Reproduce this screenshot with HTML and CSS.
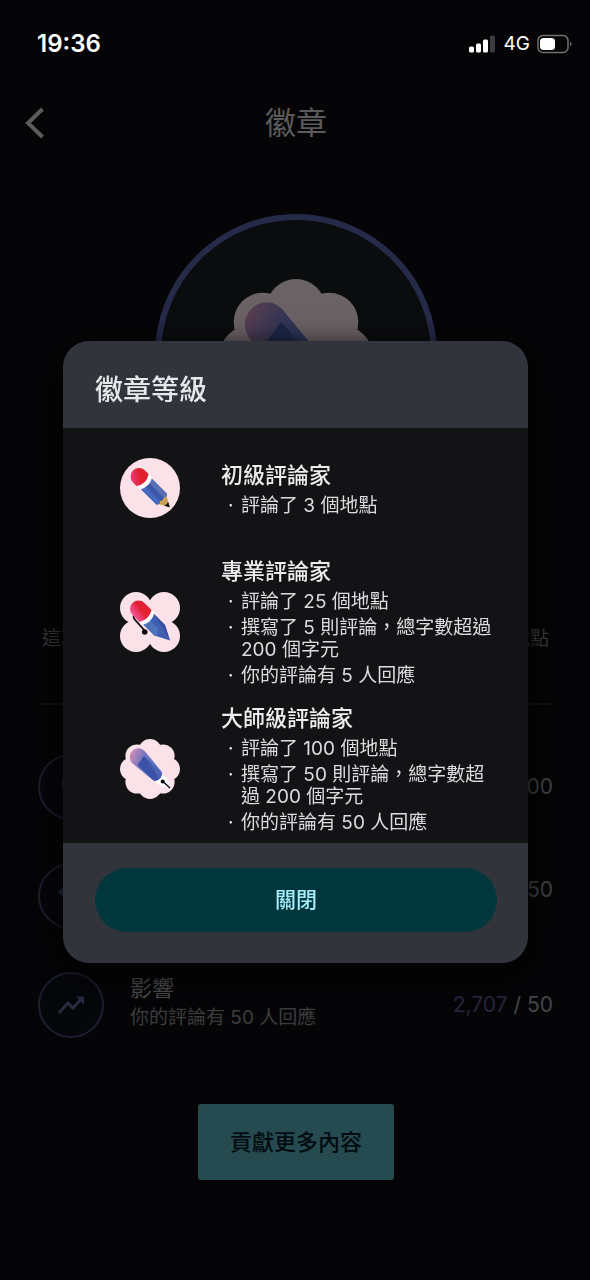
FILE: index.html
```html
<!DOCTYPE html>
<html lang="zh-Hant">
<head>
<meta charset="utf-8">
<meta name="viewport" content="width=device-width, initial-scale=1">
<title>徽章</title>
<link rel="stylesheet" href="styles.css">
</head>
<body>
<svg class="defs" width="0" height="0" aria-hidden="true">
  <defs>
    <linearGradient id="cap" x1="0.2" y1="1" x2="0.7" y2="0.2"><stop offset="0" stop-color="#f0408c"/><stop offset="0.7" stop-color="#e0202e"/></linearGradient>
    <linearGradient id="capTall" x1="0.3" y1="1" x2="0.5" y2="0"><stop offset="0" stop-color="#f65aa6"/><stop offset="0.6" stop-color="#e22132"/></linearGradient>
    <linearGradient id="pen" x1="0" y1="0.2" x2="0.7" y2="0.5"><stop offset="0" stop-color="#cf8ab6"/><stop offset="0.5" stop-color="#7b79be"/><stop offset="1" stop-color="#5a72c6"/></linearGradient>
    <symbol id="master" viewBox="0 0 60 60">
      <g fill="#fae2e8">
        <circle cx="30" cy="30" r="20"/>
        <circle cx="30" cy="11.6" r="11.6"/><circle cx="43" cy="17" r="11.6"/>
        <circle cx="48.4" cy="30" r="11.6"/><circle cx="43" cy="43" r="11.6"/>
        <circle cx="30" cy="48.4" r="11.6"/><circle cx="17" cy="43" r="11.6"/>
        <circle cx="11.6" cy="30" r="11.6"/><circle cx="17" cy="17" r="11.6"/>
      </g>
      <path d="M35.500 42.500 42.500 36 48 40 50 49.300 41 47.500Z" fill="#fff"/>
      <path d="M12 24C6.500 16.500 12.500 9.200 18.300 9.200 21.500 9.200 24 11 25.700 13.300L41.500 32.500Q43 35 40.500 39 37 42.800 33.300 41.500Z" fill="url(#pen)"/>
      <path d="M24 17 41.500 34.500Q41.500 40 35.500 42L33.300 41 17.500 26Z" fill="#3a51a8"/>
      <path d="m27 20 14.500 14q.5 3-2.500 5.800Z" fill="#4d63b4"/>
      <circle cx="42.700" cy="42.500" r="2"/>
      <path d="m43 42.500 7 6.500" stroke="#000" stroke-width="1.300"/>
    </symbol>
  </defs>
</svg>

<header class="status">
  <span class="clock">19:36</span>
  <span class="signals">
    <svg width="28" height="18" viewBox="0 0 28 18" aria-hidden="true"><g fill="#fff"><rect x="0" y="11.500" width="5" height="6" rx="1.500"/><rect x="7" y="8.500" width="5" height="9" rx="1.500"/><rect x="14" y="4.500" width="5" height="13" rx="1.500"/></g><rect x="21" y="0.500" width="5" height="17" rx="1.500" fill="#3c3c3e"/></svg>
    <span>4G</span>
    <svg width="36" height="20" viewBox="0 0 36 20" aria-hidden="true"><rect x="1" y="1.500" width="30" height="17" rx="5" fill="none" stroke="#727274" stroke-width="1.500"/><rect x="3" y="4" width="15" height="12" rx="3.500" fill="#fff"/><path d="M33 7.500v5q3-2.500 0-5" fill="#727274"/></svg>
  </span>
</header>

<nav class="topbar">
  <button class="back" aria-label="返回"><svg width="20" height="34" viewBox="0 0 20 34" aria-hidden="true"><path d="M17.500 3 3 17l14.500 14" fill="none" stroke="#5b5b5c" stroke-width="4"/></svg></button>
  <h1>徽章</h1>
</nav>

<main class="page">
  <div class="hero"><svg class="hero-badge" aria-hidden="true"><use href="#master"/></svg></div>
  <p class="intro"><span>這項</span><span>地點</span></p>
  <ul class="tasks">
    <li class="task">
      <span class="ring"><svg width="32" height="32" viewBox="0 0 32 32" fill="none" stroke="#292b40" stroke-width="3" aria-hidden="true"><circle cx="16" cy="12" r="8"/><path d="m9 17 7 12 7-12"/></svg></span>
      <span class="score">100</span>
    </li>
    <li class="task">
      <span class="ring"><svg width="32" height="32" viewBox="0 0 32 32" fill="none" stroke="#292b40" stroke-width="3" aria-hidden="true"><path d="m12 5-7 7 7 7M20 5l7 7-7 7"/></svg></span>
      <span class="score raised">50</span>
    </li>
    <li class="task">
      <span class="ring"><svg width="32" height="32" viewBox="0 0 32 32" fill="none" stroke="#292b40" stroke-width="3" aria-hidden="true"><path d="m4 24 9-10 5 5 9-10"/><path d="M21 7.500h8v8Z" fill="#292b40" stroke="none"/></svg></span>
      <div class="what"><h2>影響</h2><p>你的評論有 50 人回應</p></div>
      <span class="score"><b>2,707</b> / 50</span>
    </li>
  </ul>
  <button class="contribute">貢獻更多內容</button>
</main>

<div class="overlay">
  <section class="dialog" role="dialog" aria-modal="true" aria-labelledby="levels">
    <h2 class="dialog-title" id="levels">徽章等級</h2>
    <div class="levels">
      <article class="level">
        <svg class="badge" viewBox="0 0 60 60" aria-hidden="true">
          <circle cx="30" cy="30" r="30" fill="#fae2e8"/>
          <g transform="translate(19 18.500) rotate(45)">
            <path d="M30-7.500 43.500 0 30 7.500Z" fill="#c9a252"/>
            <path d="M38.500-2.800 43.500 0 38.500 2.800Q40 0 38.500-2.800" fill="#090909"/>
            <path d="M9-7.500H32Q35-5 32-2.500 35 0 32 2.500 35 5 32 7.500H9Z" fill="#3c56aa"/>
            <path d="M9 2.500H32Q35 5 32 7.500H9Z" fill="#476ac0"/>
            <path d="M9-7.500H32Q35-5 32-2.500H9Z" fill="#5a72b5"/>
            <path d="M6-8.500H10Q15 0 10 8.500H6Z" fill="#fff"/>
            <path d="M0-8.500H5Q11 0 5 8.500H0A8.500 8.500 0 0 1 0-8.500" fill="url(#cap)"/>
          </g>
        </svg>
        <div class="detail">
          <h3>初級評論家</h3>
          <ul><li>評論了 3 個地點</li></ul>
        </div>
      </article>
      <article class="level">
        <svg class="badge" viewBox="0 0 60 60" aria-hidden="true">
          <g fill="#fae2e8"><circle cx="16" cy="16" r="16"/><circle cx="44" cy="16" r="16"/><circle cx="16" cy="44" r="16"/><circle cx="44" cy="44" r="16"/><rect x="16" y="16" width="28" height="28"/></g>
          <path d="m13.500 23.500.5 3L24.500 38.500" fill="none" stroke="#090909" stroke-width="1.700"/>
          <circle cx="24.700" cy="40" r="2.800" fill="#090909"/>
          <g transform="translate(18.500 17) rotate(45)">
            <path d="M12-7.500H30L44.500 0 30 7.500H12Z" fill="#3f60b1"/>
            <path d="M12 0H28L32 6.500 30 7.500H12Z" fill="#4f72bd"/>
            <path d="M12-7.500H30L44.500 0 28-4Z" fill="#38509f"/>
            <path d="M9-8.500H14Q19 0 14 8.500H9Z" fill="#fff"/>
            <path d="M0-8.500H10Q15 0 10 8.500H0A8.500 8.500 0 0 1 0-8.500" fill="url(#capTall)"/>
          </g>
        </svg>
        <div class="detail">
          <h3>專業評論家</h3>
          <ul><li>評論了 25 個地點</li><li>撰寫了 5 則評論，總字數超過 200 個字元</li><li>你的評論有 5 人回應</li></ul>
        </div>
      </article>
      <article class="level">
        <svg class="badge" aria-hidden="true"><use href="#master"/></svg>
        <div class="detail">
          <h3>大師級評論家</h3>
          <ul><li>評論了 100 個地點</li><li>撰寫了 50 則評論，總字數超過 200 個字元</li><li>你的評論有 50 人回應</li></ul>
        </div>
      </article>
    </div>
    <footer class="dialog-footer"><button class="close">關閉</button></footer>
  </section>
</div>
</body>
</html>
```
FILE: styles.css
```css
* { box-sizing: border-box; }

body {
  margin: 0;
  min-height: 100vh;
  background: #050507;
  color: #3c3c3d;
  font-family: Inter, "Noto Sans CJK TC", sans-serif;
  font-size: 19px;
  line-height: 22px;
}

h1, h2, h3, p, ul { margin: 0; padding: 0; font-weight: 400; }
ul { list-style: none; }
button { border: 0; padding: 0; font: inherit; font-size: 22px; font-weight: 500; }
.defs { position: absolute; }

.status {
  display: flex;
  justify-content: space-between;
  align-items: center;
  height: 88px;
  padding: 0 17px 0 37px;
  color: #fff;
}
.clock { font-size: 24px; font-weight: 600; }
.signals { display: flex; align-items: center; gap: 7px; }

.topbar {
  display: grid;
  grid-template-columns: 64px 1fr 62px;
  align-items: center;
  height: 70px;
}
.back { display: flex; padding-left: 25px; background: none; }
.topbar h1 { color: #5b5b5c; font-size: 31px; line-height: 40px; text-align: center; }

.page { display: flex; flex-direction: column; padding: 56px 36px 99px 38px; }
.hero {
  display: flex;
  align-items: center;
  justify-content: center;
  align-self: center;
  width: 282px;
  height: 282px;
  border: 6px solid #262a49;
  border-radius: 50%;
  background: #0b0c0e;
}
.hero-badge { width: 152px; height: 152px; opacity: 0.4; }
.intro {
  display: flex;
  justify-content: space-between;
  padding: 132px 5px 53px 4px;
  border-bottom: 2px solid #111113;
}

.tasks { display: flex; flex-direction: column; gap: 43px; padding: 49px 1px 0 0; }
.task { display: flex; align-items: center; gap: 26px; }
.ring {
  display: flex;
  align-items: center;
  justify-content: center;
  width: 66px;
  height: 66px;
  border: 2px solid #1d1e2f;
  border-radius: 50%;
  background: #06070b;
}
.what { flex: 1; padding-bottom: 9px; }
.what h2 { margin-bottom: 3px; color: #4a4a4b; font-size: 22px; line-height: 32px; }
.score { margin-left: auto; color: #464647; font-size: 21px; }
.score b { color: #25263c; font-weight: 400; }
.raised { padding-bottom: 12px; }

.contribute {
  align-self: center;
  height: 76px;
  margin-top: 66px;
  padding: 0 32px;
  border-radius: 3px;
  background: #254a50;
  color: #020c10;
}

.overlay {
  position: fixed;
  inset: 0;
  display: flex;
  align-items: center;
  justify-content: center;
  padding: 24px 62px 0 63px;
}
.dialog {
  width: 100%;
  overflow: hidden;
  border-radius: 26px;
  background: #32343c;
  box-shadow: 0 8px 32px #000;
  color: #dcdcdf;
}
.dialog-title {
  padding: 29px 32px 18px;
  color: #e6e7ea;
  font-size: 28px;
  line-height: 40px;
  font-weight: 500;
}
.levels {
  display: flex;
  flex-direction: column;
  gap: 16px;
  padding: 8px 32px 9px 57px;
  background: #131315;
}
.level { display: flex; align-items: center; gap: 41px; min-height: 104px; }
.badge { flex: none; width: 60px; height: 60px; }
.detail { flex: 1; }
.detail h3 { margin-bottom: 5px; color: #ececee; font-size: 22px; line-height: 30px; font-weight: 500; }
.detail ul { display: flex; flex-direction: column; gap: 4px; }
.detail li { display: flex; }
.detail li::before { content: "·"; flex: none; width: 13px; padding-left: 7px; }
.dialog-footer { padding: 25px 31px 31px 32px; }
.close {
  width: 100%;
  height: 64px;
  border-radius: 32px;
  background: #01363d;
  color: #a3eefa;
  font-size: 21px;
}
```
